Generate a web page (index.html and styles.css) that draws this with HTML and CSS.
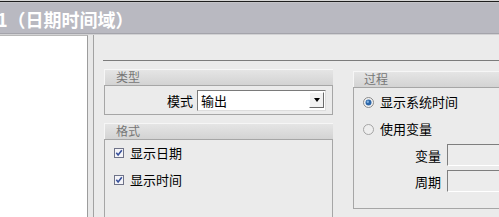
FILE: index.html
```html
<!DOCTYPE html>
<html lang="zh">
<head>
<meta charset="utf-8">
<link rel="stylesheet" href="styles.css">
</head>
<body>
<div class="topstrip"></div>
<div class="titlebar"><span class="title">1（日期时间域）</span></div>
<div class="main">
  <div class="leftpane"></div>
  <div class="gap"></div>
  <div class="content">
    <div class="frame">
      <div class="col left">
        <div class="group">
          <div class="ghead">类型</div>
          <div class="gbody type-body">
            <span class="lbl mode-lbl">模式</span>
            <div class="select">
              <span class="select-text">输出</span>
              <span class="select-btn"><span class="arrow"></span></span>
            </div>
          </div>
        </div>
        <div class="group fmt">
          <div class="ghead">格式</div>
          <div class="gbody fmt-body">
            <div class="row">
              <svg class="chk" width="10" height="10" viewBox="0 0 10 10"><rect x="0.5" y="0.5" width="9" height="9" fill="#f4f4f8" stroke="#6f7388"/><path d="M2.3 4.8 L4.1 6.9 L7.8 2.3" fill="none" stroke="#37509a" stroke-width="1.6"/></svg>
              <span class="txt">显示日期</span>
            </div>
            <div class="row">
              <svg class="chk" width="10" height="10" viewBox="0 0 10 10"><rect x="0.5" y="0.5" width="9" height="9" fill="#f4f4f8" stroke="#6f7388"/><path d="M2.3 4.8 L4.1 6.9 L7.8 2.3" fill="none" stroke="#37509a" stroke-width="1.6"/></svg>
              <span class="txt">显示时间</span>
            </div>
          </div>
        </div>
      </div>
      <div class="col right">
        <div class="group">
          <div class="ghead">过程</div>
          <div class="gbody proc-body">
            <div class="row">
              <svg class="radio" width="11" height="11" viewBox="0 0 11 11"><circle cx="5.5" cy="5.5" r="5" fill="#f2f2f2" stroke="#8a8a8a"/><circle cx="5.5" cy="5.5" r="3" fill="#2c66a8"/><circle cx="4.8" cy="4.7" r="1.2" fill="#7fb0e0"/></svg>
              <span class="txt">显示系统时间</span>
            </div>
            <div class="row">
              <svg class="radio" width="11" height="11" viewBox="0 0 11 11"><circle cx="5.5" cy="5.5" r="5" fill="#eeeeee" stroke="#a4a4a4"/></svg>
              <span class="txt">使用变量</span>
            </div>
            <div class="field first">
              <span class="lbl field-lbl">变量</span>
              <span class="input"></span>
            </div>
            <div class="field">
              <span class="lbl field-lbl">周期</span>
              <span class="input"></span>
            </div>
          </div>
        </div>
      </div>
    </div>
  </div>
</div>
</body>
</html>
```

FILE: styles.css
```css
html, body {
  margin: 0;
  padding: 0;
}
body {
  width: 499px;
  height: 217px;
  overflow: hidden;
  background: #ebebeb;
  font-family: "Noto Sans CJK SC", "Noto Sans", sans-serif;
  font-size: 13px;
  color: #000;
}
.topstrip {
  height: 3px;
  background: linear-gradient(#d6d6d6 0 1px, #1e1e1e 1px 2px, #c4c4c8 2px 3px);
}
.titlebar {
  height: 30px;
  background: #b9b9c1;
  border-bottom: 1px solid #a4a4ab;
  overflow: hidden;
  white-space: nowrap;
}
.title {
  display: block;
  margin-left: -3px;
  color: #fff;
  font-weight: bold;
  font-size: 18px;
  line-height: 32px;
}
.main {
  display: flex;
  height: 183px;
  border-top: 1px solid #d2d2d4;
}
.leftpane {
  width: 87px;
  flex: none;
  background: #fff;
  border-top: 1px solid #b8b8b8;
  border-right: 1px solid #9c9c9c;
}
.gap {
  width: 5px;
  flex: none;
  background: #e8e8e8;
}
.content {
  flex: 1;
  border-left: 1px solid #a2a2a2;
  background: #ebebeb;
  padding: 25px 0 0 9px;
  overflow: hidden;
}
.frame {
  border-top: 1px solid #7c7c7c;
  display: flex;
  gap: 20px;
  padding: 8px 0 0 1px;
}
.col.left {
  width: 229px;
  flex: none;
}
.col.right {
  width: 230px;
  flex: none;
  padding-top: 2px;
}
.ghead {
  height: 16px;
  line-height: 16px;
  padding-left: 12px;
  font-size: 12px;
  color: #767676;
  background: linear-gradient(#e6e6e6, #d3d3d3);
  box-shadow: inset 1px 1px 0 #f6f6f6;
}
.right .ghead {
  padding-left: 11px;
}
.gbody {
  border: 1px solid #a6a6a6;
}
.type-body {
  height: 28px;
  display: flex;
  align-items: center;
}
.lbl {
  text-align: right;
  flex: none;
}
.mode-lbl {
  width: 88px;
  margin-right: 4px;
}
.select {
  width: 127px;
  height: 19px;
  background: #fff;
  border-top: 1px solid #7a7a7a;
  border-left: 1px solid #7a7a7a;
  border-right: 1px solid #dcdcdc;
  border-bottom: 1px solid #dcdcdc;
  display: flex;
  align-items: center;
  justify-content: space-between;
}
.select-text {
  padding-left: 3px;
  line-height: 19px;
}
.select-btn {
  width: 15px;
  height: 16px;
  margin-right: 1px;
  box-sizing: border-box;
  background: #f2f2f2;
  border-top: 1px solid #fff;
  border-left: 1px solid #fff;
  border-right: 1px solid #6a6a6a;
  border-bottom: 1px solid #6a6a6a;
  display: flex;
  align-items: center;
  justify-content: center;
}
.arrow {
  width: 0;
  height: 0;
  border-left: 3px solid transparent;
  border-right: 3px solid transparent;
  border-top: 4px solid #000;
}
.group.fmt {
  margin-top: 8px;
}
.fmt-body {
  height: 120px;
  padding: 7px 0 0 9px;
  display: flex;
  flex-direction: column;
  gap: 15px;
}
.row {
  display: flex;
  align-items: center;
  height: 12px;
}
.chk, .radio {
  flex: none;
  margin-right: 6px;
}
.txt {
  line-height: 12px;
}
.proc-body {
  height: 112px;
  padding: 8px 0 0 9px;
  display: flex;
  flex-direction: column;
  gap: 15px;
}
.field {
  display: flex;
  align-items: center;
  margin-left: -9px;
  margin-top: -6px;
}
.field.first {
  margin-top: -6px;
}
.field + .field {
  margin-top: -11px;
}
.field-lbl {
  width: 87px;
  margin-right: 6px;
}
.input {
  display: block;
  width: 120px;
  height: 20px;
  background: #ececec;
  border-top: 1px solid #7e7e7e;
  border-left: 1px solid #7e7e7e;
  border-right: 1px solid #fff;
  border-bottom: 1px solid #fff;
}
```
